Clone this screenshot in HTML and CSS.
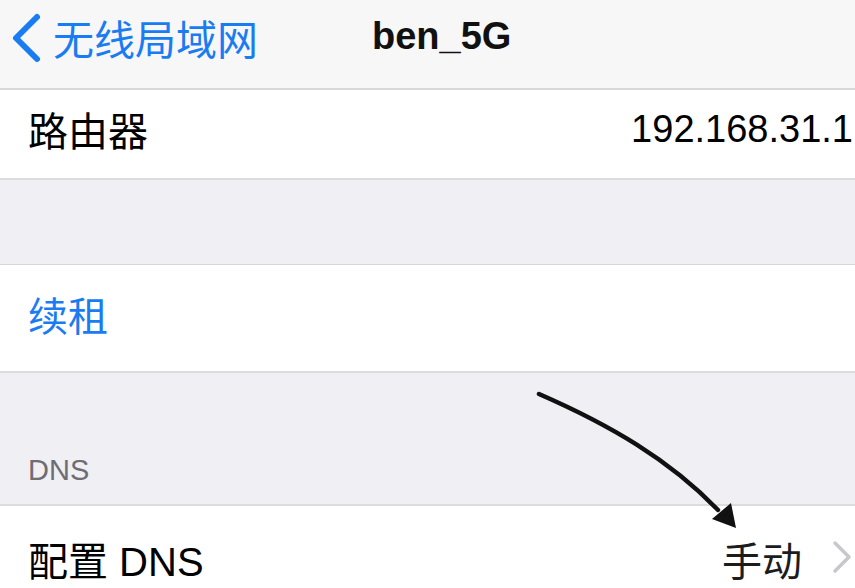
FILE: index.html
```html
<!DOCTYPE html>
<html lang="zh-CN">
<head>
  <meta charset="UTF-8">
  <title>ben_5G</title>
  <link rel="stylesheet" href="styles.css">
</head>
<body>
  <div class="nav">
    <a class="back" href="#">
      <svg class="back-icon" width="34" height="52" viewBox="0 0 34 52">
        <polyline points="28,5 7,26 28,47" fill="none" stroke="#1a7cf2" stroke-width="6" stroke-linecap="round" stroke-linejoin="round"/>
      </svg>
      <span>无线局域网</span>
    </a>
    <div class="nav-title">ben_5G</div>
  </div>

  <div class="row row-router">
    <span class="label">路由器</span>
    <span class="value">192.168.31.1</span>
  </div>

  <div class="gap gap-1"></div>

  <div class="row row-renew">
    <span class="label link">续租</span>
  </div>

  <div class="gap gap-2">
    <span class="section-title">DNS</span>
  </div>

  <div class="row row-dns">
    <span class="label">配置 DNS</span>
    <span class="value dns-mode">手动</span>
    <svg class="chevron" width="20" height="34" viewBox="0 0 20 34">
      <polyline points="3,3 17,17 3,31" fill="none" stroke="#c7c7cc" stroke-width="3.5" stroke-linecap="round" stroke-linejoin="round"/>
    </svg>
  </div>

  <!-- hand-drawn arrow pointing at the DNS mode -->
  <svg class="arrow" width="855" height="588" viewBox="0 0 855 588">
    <path d="M539 394 C 610 425, 670 460, 718 510" fill="none" stroke="#111" stroke-width="4.5" stroke-linecap="round"/>
    <polygon points="712,519 731,503 736,528" fill="#111"/>
  </svg>
</body>
</html>
```

FILE: styles.css
```css
body {
  margin: 0;
  width: 855px;
  height: 588px;
  overflow: hidden;
  position: relative;
  background: #efeff4;
  font-family: "Liberation Sans", "Noto Sans CJK SC", sans-serif;
  color: #000;
}

.nav {
  height: 88px;
  background: #f7f7f7;
  border-bottom: 2px solid #d8d8d8;
  display: flex;
  align-items: center;
  position: relative;
}
.back {
  display: flex;
  align-items: center;
  color: #1a7cf2;
  text-decoration: none;
  font-size: 41px;
  padding-left: 9px;
  margin-top: -14px;
}
.back-icon { margin-right: 10px; margin-top: 2px; }
.nav-title {
  position: absolute;
  left: 372px;
  top: 15px;
  font-size: 38px;
  font-weight: bold;
  color: #111;
}

.row {
  background: #fff;
  display: flex;
  align-items: center;
  padding-left: 28px;
  font-size: 40px;
}
.row-router {
  border-bottom: 2px solid #dcdce0;
  padding-bottom: 10px;
  box-sizing: border-box;
  height: 90px;
}
.row-renew {
  border-top: 1px solid #d6d6da;
  border-bottom: 2px solid #dcdce0;
  padding-bottom: 8px;
  box-sizing: border-box;
  height: 109px;
}
.row-dns {
  height: 84px;
  border-top: 2px solid #dcdce0;
  padding-top: 24px;
  box-sizing: border-box;
}

.label { flex: 1; }
.link { color: #1a7cf2; }
.value {
  font-size: 38px;
  padding-right: 2px;
}
.dns-mode {
  font-size: 40px;
  color: #1c1c1c;
  padding-right: 30px;
}
.chevron { margin-right: 3px; margin-top: -4px; }

.gap-1 { height: 84px; }
.gap-2 {
  height: 131px;
  display: flex;
  align-items: flex-end;
  padding-left: 28px;
}
.section-title {
  font-size: 29px;
  color: #6d6d72;
  padding-bottom: 17px;
}

.arrow {
  position: absolute;
  left: 0;
  top: 0;
  pointer-events: none;
}
```
